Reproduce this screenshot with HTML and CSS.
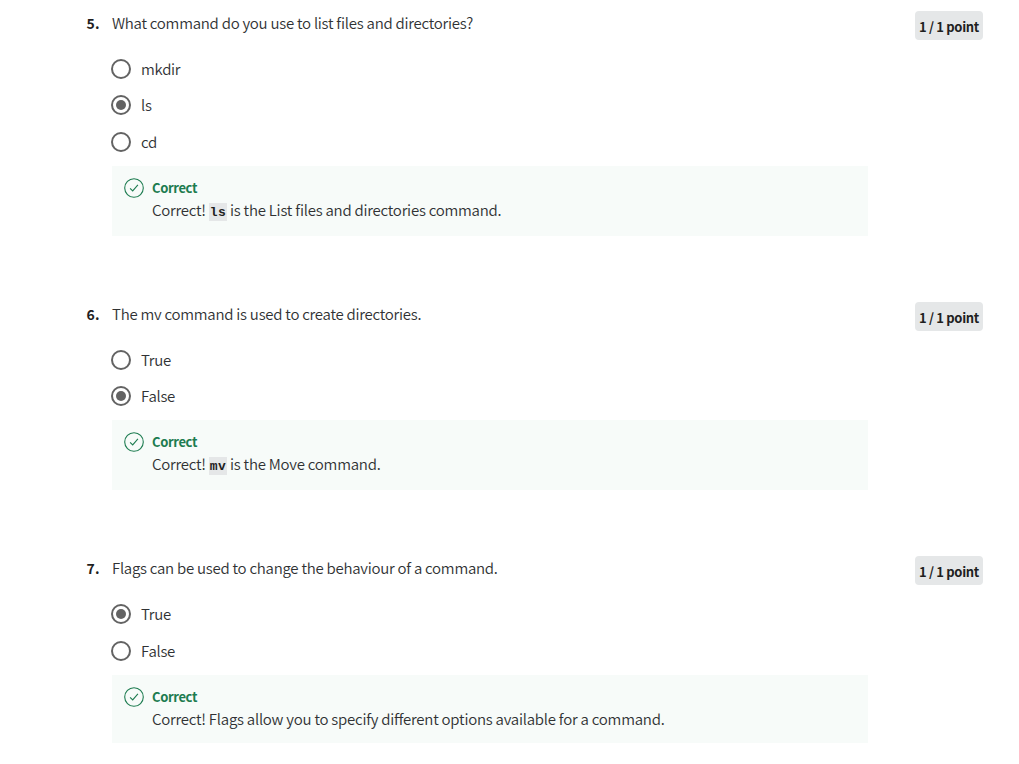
FILE: index.html
```html
<!DOCTYPE html>
<html lang="en">
<head>
<meta charset="utf-8">
<title>Quiz</title>
<link rel="stylesheet" href="styles.css">
</head>
<body>
<main class="quiz">
<section class="question first">
<div class="number">5.</div>
<div class="content">
<p class="prompt">What command do you use to list files and directories?</p>
<ul class="options">
<li class="option"><i class="radio"></i><span>mkdir</span></li>
<li class="option"><i class="radio on"></i><span>ls</span></li>
<li class="option"><i class="radio"></i><span>cd</span></li>
</ul>
<div class="feedback">
<svg class="check" viewBox="0 0 20 20"><circle cx="10" cy="10" r="9.3"/><path d="M6.1 10.3l2.6 2.6 5.2-6"/></svg>
<div><h3>Correct</h3><p>Correct! <code>ls</code> is the List files and directories command.</p></div>
</div>
</div>
<div class="points">1 / 1 point</div>
</section>
<section class="question second">
<div class="number">6.</div>
<div class="content">
<p class="prompt">The mv command is used to create directories.</p>
<ul class="options">
<li class="option"><i class="radio"></i><span>True</span></li>
<li class="option"><i class="radio on"></i><span>False</span></li>
</ul>
<div class="feedback">
<svg class="check" viewBox="0 0 20 20"><circle cx="10" cy="10" r="9.3"/><path d="M6.1 10.3l2.6 2.6 5.2-6"/></svg>
<div><h3>Correct</h3><p>Correct! <code>mv</code> is the Move command.</p></div>
</div>
</div>
<div class="points">1 / 1 point</div>
</section>
<section class="question third">
<div class="number">7.</div>
<div class="content">
<p class="prompt">Flags can be used to change the behaviour of a command.</p>
<ul class="options">
<li class="option"><i class="radio on"></i><span>True</span></li>
<li class="option"><i class="radio"></i><span>False</span></li>
</ul>
<div class="feedback">
<svg class="check" viewBox="0 0 20 20"><circle cx="10" cy="10" r="9.3"/><path d="M6.1 10.3l2.6 2.6 5.2-6"/></svg>
<div><h3>Correct</h3><p>Correct! Flags allow you to specify different options available for a command.</p></div>
</div>
</div>
<div class="points">1 / 1 point</div>
</section>
</main>
</body>
</html>
```
FILE: styles.css
```css
* { box-sizing: border-box; margin: 0; padding: 0; }
body { background: #fff; color: #303234; font: 350 15px/22px "Noto Sans CJK SC", "Noto Sans", sans-serif; letter-spacing: -0.26px; font-feature-settings: "liga" 1; }
.quiz { padding: 11px 36px 0 86px; }
.question { display: grid; grid-template-columns: 26px 756px 1fr; height: 254px; }
.question.first { height: 291px; }
.question.third { height: 232px; }
.number { font-size: 14px; font-weight: 700; line-height: 25px; letter-spacing: 0.3px; padding-left: 0.5px; color: #1f1f1f; }
.prompt { line-height: 24px; height: 40px; }
.options { list-style: none; }
.option { display: flex; align-items: center; height: 36px; gap: 10px; margin-left: -1px; }
.option:last-child { height: 37px; padding-top: 1px; }
.second .option:last-child { height: 36px; padding-top: 0; }
.radio { position: relative; width: 20px; height: 20px; border: 2px solid #636363; border-radius: 50%; flex: none; }
.radio.on::after { content: ""; position: absolute; inset: 3px; border-radius: 50%; background: #636363; }
.feedback { display: flex; height: 70px; margin-top: 6px; padding: 12px 12px 0; gap: 8px; background: #f7fbf9; }
.third .feedback { height: 68px; margin-top: 6px; }
.check { width: 20px; height: 20px; flex: none; fill: none; stroke: #1d7c50; stroke-width: 1.1; }
h3 { color: #1d7c50; font-size: 13px; line-height: 22px; margin-top: -1px; letter-spacing: -0.36px; }
.feedback p { line-height: 22px; letter-spacing: -0.24px; }
code { font: bold 13px/18px "Liberation Mono", monospace; letter-spacing: 0.6px; color: #1f1f1f; background: #e5e7e8; padding: 2px 0.4px 1px 0.8px; }
.points { justify-self: end; width: 68px; height: 29px; border-radius: 4px; background: #e5e7e8; color: #1f1f1f; text-align: center; font-size: 13px; font-weight: 700; letter-spacing: -0.33px; line-height: 31px; white-space: nowrap; }
```
